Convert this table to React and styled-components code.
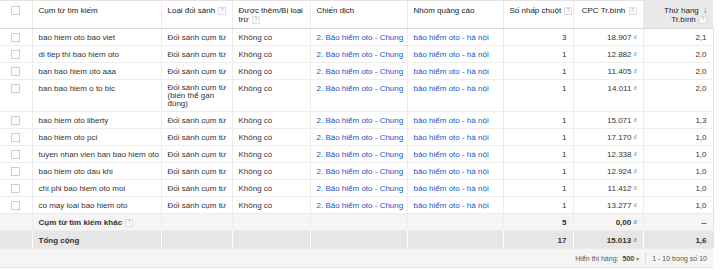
import React from 'react';
import styled, { createGlobalStyle } from 'styled-components';

const GlobalStyle = createGlobalStyle`
  body {
    margin: 0;
    background: #fff;
    font-family: "Liberation Sans", Arial, sans-serif;
  }
`;

const COLS = [32, 129, 71, 78, 97, 96, 70, 70, 70];

const rows = [
  { term: 'bao hiem oto bao viet', clicks: 3, cpc: '18.907', rank: '2,1' },
  { term: 'di tiep thi bao hiem oto', clicks: 1, cpc: '12.882', rank: '2,0' },
  { term: 'ban bao hiem oto aaa', clicks: 1, cpc: '11.405', rank: '2,0' },
  { term: 'ban bao hiem o to bic', match: 'Đối sánh cụm từ (biến thể gần đúng)', clicks: 1, cpc: '14.011', rank: '2,0' },
  { term: 'bao hiem oto liberty', clicks: 1, cpc: '15.071', rank: '1,3' },
  { term: 'bao hiem oto pci', clicks: 1, cpc: '17.170', rank: '1,0' },
  { term: 'tuyen nhan vien ban bao hiem oto', clicks: 1, cpc: '12.338', rank: '1,0' },
  { term: 'bao hiem oto dau khi', clicks: 1, cpc: '12.924', rank: '1,0' },
  { term: 'chi phi bao hiem oto moi', clicks: 1, cpc: '11.412', rank: '1,0' },
  { term: 'co may loai bao hiem oto', clicks: 1, cpc: '13.277', rank: '1,0' },
];

export default function App() {
  return (
    <>
      <GlobalStyle />
      <S.Table>
        <colgroup>
          {COLS.map((w, i) => <S.Col key={i} $w={w} />)}
        </colgroup>
        <thead>
          <tr>
            <S.Th $center><S.Check /></S.Th>
            <S.Th>Cụm từ tìm kiếm</S.Th>
            <S.Th>Loại đối sánh <Help /></S.Th>
            <S.Th $wrap>Được thêm/Bị loại trừ <Help /></S.Th>
            <S.Th>Chiến dịch</S.Th>
            <S.Th>Nhóm quảng cáo</S.Th>
            <S.Th $right>Số nhấp chuột <Help /></S.Th>
            <S.Th $right>CPC Tr.bình <Help /></S.Th>
            <S.Th $right $sorted>Thứ hạng <S.Arrow>↓</S.Arrow><br />Tr.bình <Help /></S.Th>
          </tr>
        </thead>
        <tbody>
          {rows.map(r => (
            <tr key={r.term}>
              <S.Td $center><S.Check /></S.Td>
              <S.Td>{r.term}</S.Td>
              <S.Td $wrap={!!r.match}>{r.match || 'Đối sánh cụm từ'}</S.Td>
              <S.Td>Không có</S.Td>
              <S.Td><S.Link>2. Bảo hiểm oto - Chung</S.Link></S.Td>
              <S.Td><S.Link>bảo hiểm oto - hà nội</S.Link></S.Td>
              <S.Td $right>{r.clicks}</S.Td>
              <S.Td $right>{r.cpc} <S.Cur>đ</S.Cur></S.Td>
              <S.Td $right>{r.rank}</S.Td>
            </tr>
          ))}
          <S.SumRow $tone="other">
            <S.Td />
            <S.Td $bold>Cụm từ tìm kiếm khác <Help /></S.Td>
            <S.Td /><S.Td /><S.Td /><S.Td />
            <S.Td $right $bold>5</S.Td>
            <S.Td $right $bold>0,00 <S.Cur>đ</S.Cur></S.Td>
            <S.Td $right $bold>--</S.Td>
          </S.SumRow>
          <S.SumRow $tone="total">
            <S.Td $flat />
            <S.Td $bold $flat>Tổng cộng</S.Td>
            <S.Td $flat /><S.Td $flat /><S.Td $flat /><S.Td $flat />
            <S.Td $right $bold $flat>17</S.Td>
            <S.Td $right $bold $flat>15.013 <S.Cur>đ</S.Cur></S.Td>
            <S.Td $right $bold $flat>1,6</S.Td>
          </S.SumRow>
        </tbody>
        <tfoot>
          <tr>
            <S.Foot colSpan={9}>
              <S.Pager>
                <span>Hiển thị hàng:</span>
                <S.PageSize>500 <S.Caret>▾</S.Caret></S.PageSize>
                <S.Sep />
                <span>1 - 10 trong số 10</span>
              </S.Pager>
            </S.Foot>
          </tr>
        </tfoot>
      </S.Table>
    </>
  );
}

function Help() {
  return <S.Help>?</S.Help>;
}

const S = {};
S.Table = styled.table`
  width: 713px;
  table-layout: fixed;
  border-collapse: collapse;
  font-size: 8px;
  line-height: 9px;
  color: #333;
  border-top: 1px solid #e4e4e4;
`;
S.Col = styled.col`
  width: ${p => p.$w}px;
`;
S.Th = styled.th`
  height: 28px;
  box-sizing: border-box;
  padding: 5px 6px 2px;
  vertical-align: top;
  font-weight: normal;
  color: #222;
  white-space: ${p => (p.$wrap ? 'normal' : 'nowrap')};
  text-align: ${p => (p.$center ? 'center' : p.$right ? 'right' : 'left')};
  background: ${p => (p.$sorted ? '#e9e9e9' : '#fff')};
  border-bottom: 1px solid #d9d9d9;
  border-left: 1px solid #ececec;
  &:first-child { border-left: none; }
`;
S.Td = styled.td`
  padding: 4px ${p => (p.$wrap ? '2px' : '6px')} 3px 6px;
  vertical-align: top;
  text-align: ${p => (p.$center ? 'center' : p.$right ? 'right' : 'left')};
  font-weight: ${p => (p.$bold ? 'bold' : 'normal')};
  border-bottom: 1px solid #ededed;
  border-left: 1px solid ${p => (p.$flat ? 'transparent' : '#ededed')};
  white-space: ${p => (p.$wrap ? 'normal' : 'nowrap')};
  line-height: ${p => (p.$wrap ? '8px' : '9px')};
  overflow: hidden;
  &:first-child { border-left: none; padding-left: 6px; padding-right: 6px; }
  &:last-child { border-right: 1px solid #e4e4e4; }
`;
S.SumRow = styled.tr`
  background: ${p => (p.$tone === 'total' ? '#e6e6e6' : '#f5f5f5')};
  & > td {
    color: #333;
    padding-top: ${p => (p.$tone === 'total' ? '5px' : '4px')};
  }
`;
S.Foot = styled.td`
  background: #f5f5f5;
  padding: 4px 6px 3px;
  border-bottom: 1px solid #e4e4e4;
  color: #555;
  font-size: 7px;
`;
S.Pager = styled.div`
  display: flex;
  justify-content: flex-end;
  align-items: center;
  gap: 3px;
`;
S.PageSize = styled.span`
  font-weight: bold;
  color: #444;
  margin-left: 1px;
`;
S.Caret = styled.span`
  font-weight: normal;
  font-size: 6px;
  color: #777;
`;
S.Sep = styled.span`
  width: 1px;
  height: 11px;
  background: #ddd;
  margin: 0 3px;
`;
S.Check = styled.span`
  display: inline-block;
  width: 7px;
  height: 7px;
  border: 1px solid #cfcfcf;
  background: #fff;
  vertical-align: top;
`;
S.Link = styled.span`
  color: #2158c4;
`;
S.Cur = styled.span`
  font-size: 5px;
  color: #888;
  vertical-align: 1px;
`;
S.Arrow = styled.span`
  color: #555;
  margin-left: 2px;
`;
S.Help = styled.span`
  display: inline-block;
  width: 6px;
  height: 6px;
  line-height: 6px;
  font-size: 4.5px;
  text-align: center;
  color: #aaa;
  border: 1px solid #e0e0e0;
  background: #fafafa;
  vertical-align: middle;
  margin-left: 1px;
  font-weight: normal;
`;
